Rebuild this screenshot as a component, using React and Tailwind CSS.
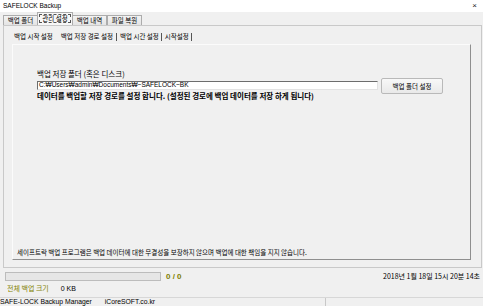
import React from "react";

const KO = { fontFamily: '"Noto Sans CJK KR", "Noto Sans", sans-serif' };
const LAT = { fontFamily: '"Liberation Sans", "Noto Sans CJK KR", sans-serif' };

const mainTabs = ["백업 폴더", "관리 설정", "백업 내역", "파일 복원"];

function MainTab({ label, active }) {
  if (active) {
    return (
      <div className="h-[13px] w-[36px] -mx-[1px] z-10 bg-[#f7f7f7] border border-b-0 border-[#acacac] flex items-start justify-center pt-[1px]">
        <span className="border border-dashed border-[#555] px-[2px] leading-[7px] h-[9px] flex items-center text-[6.5px] text-black">
          {label}
        </span>
      </div>
    );
  }
  return (
    <div className="h-[10px] w-[35px] bg-gradient-to-b from-[#f3f3f3] to-[#e4e4e4] border border-b-0 border-[#acacac] flex items-center justify-center text-[6.5px] text-black leading-none">
      {label}
    </div>
  );
}

export default function App() {
  return (
    <div className="w-[483px] h-[306px] bg-[#f0f0f0] flex flex-col overflow-hidden select-none" style={KO}>
      {/* title bar */}
      <div className="h-[12px] bg-white flex items-center justify-between pl-[3px] pr-[6px]">
        <span className="text-[6.5px] leading-none text-black" style={LAT}>SAFELOCK Backup</span>
        <span className="text-[8px] leading-none text-[#222]" style={LAT}>×</span>
      </div>

      {/* main tab strip */}
      <div className="h-[13px] flex items-end pl-[3px]">
        {mainTabs.map((t) => (
          <MainTab key={t} label={t} active={t === "관리 설정"} />
        ))}
      </div>

      {/* tab page */}
      <div className="h-[243px] ml-[3px] mr-[1px] border border-[#c9c9c9] bg-[#f0f0f0] flex flex-col">
        {/* sub tabs */}
        <div className="h-[18px] flex items-center pl-[9px] pt-[3px] text-[6.5px] text-black leading-none">
          <span className="px-[1px]">백업 시작 설정</span>
          <span className="ml-[6px] px-[1px]">백업 저장 경로 설정</span>
          <span className="ml-[2px] w-px h-[8px] bg-[#555]" />
          <span className="ml-[3px]">백업 시간 설정</span>
          <span className="ml-[2px] w-px h-[8px] bg-[#555]" />
          <span className="ml-[3px]">시작설정</span>
          <span className="ml-[2px] w-px h-[8px] bg-[#555]" />
        </div>

        {/* inner panel */}
        <div className="ml-[8px] w-[459px] h-[216px] border border-t-[#fbfbfb] border-l-[#fbfbfb] border-r-[#8f8f8f] border-b-[#8f8f8f] flex flex-col">
          <div className="flex pl-[24px] pt-[25px]">
            <div className="w-[341px] flex flex-col">
              <span className="text-[7.5px] leading-[8px] text-black">백업 저장 폴더 (혹은 디스크)</span>
              <div className="mt-[3px] h-[9px] bg-white border border-t-[#6d6d6d] border-l-[#6d6d6d] border-r-[#e3e3e3] border-b-[#e3e3e3] flex items-center pl-[1px]">
                <span className="text-[6.5px] leading-none text-black" style={LAT}>C:₩Users₩admin₩Documents₩~SAFELOCK~BK</span>
              </div>
              <span className="mt-[2px] text-[7.5px] leading-[8px] font-bold text-black whitespace-nowrap">
                데이터를 백업할 저장 경로를 설정 합니다. (설정된 경로에 백업 데이터를 저장 하게 됩니다)
              </span>
            </div>
            <div className="ml-[3px] mt-[8px] w-[62px] h-[16px] rounded-[2px] border border-[#b9b9b9] bg-gradient-to-b from-[#f8f8f8] to-[#e9e9e9] flex items-center justify-center text-[6.5px] text-black leading-none">
              백업 폴더 설정
            </div>
          </div>
          <div className="mt-auto pl-[4px] pb-[3px] text-[6.5px] leading-[7px] text-black">
            세이프트락 백업 프로그램은 백업 데이터에 대한 무결성을 보장하지 않으며 백업에 대한 책임을 지지 않습니다.
          </div>
        </div>
      </div>

      {/* progress area */}
      <div className="h-[29px] flex flex-col pl-[5px] pr-[3px] pt-[4px]">
        <div className="flex items-center h-[9px]">
          <div className="w-[156px] h-[9px] border border-[#bcbcbc] bg-[#e6e6e6]" />
          <span className="ml-[5px] text-[8px] font-bold text-[#808000] leading-none" style={LAT}>0 / 0</span>
          <span className="ml-auto text-[7px] text-black leading-none">2018년 1월 18일 15시 20분 14초</span>
        </div>
        <div className="flex items-center mt-[3px] h-[9px] pl-[2px]">
          <span className="text-[7px] text-[#808000] leading-none">전체 백업 크기</span>
          <span className="ml-[12px] text-[7px] text-black leading-none" style={LAT}>0 KB</span>
        </div>
      </div>

      {/* status bar */}
      <div className="flex-1 border-t border-[#d7d7d7] flex items-center">
        <div className="w-[326px] h-full border-r border-[#c8c8c8] flex items-center text-[6.8px] text-black leading-none" style={LAT}>
          <span>SAFE-LOCK Backup Manager</span>
          <span className="ml-[13px]">iCoreSOFT.co.kr</span>
        </div>
      </div>
    </div>
  );
}
